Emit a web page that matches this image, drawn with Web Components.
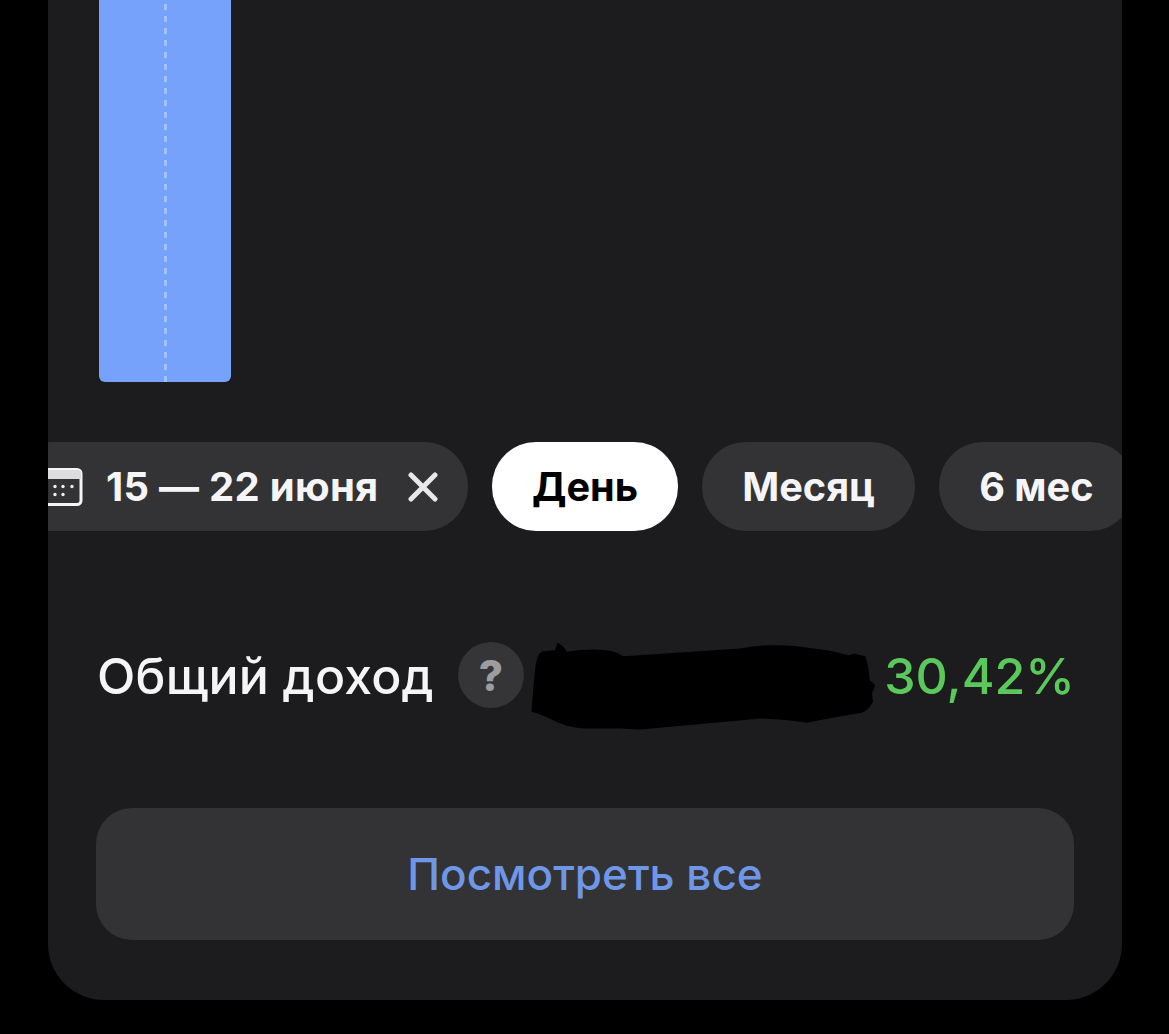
<!DOCTYPE html>
<html lang="ru">
<head>
<meta charset="utf-8">
<style>
  html, body { margin: 0; background: #000; }
  body { height: 1034px; overflow: hidden; font-family: Inter, "Liberation Sans", sans-serif; }
</style>
</head>
<body>
<income-card>
  <chart-bar></chart-bar>
  <chip-row>
    <range-chip>15 — 22 июня</range-chip>
    <period-chip active>День</period-chip>
    <period-chip>Месяц</period-chip>
    <period-chip>6 мес</period-chip>
  </chip-row>
  <income-total label="Общий доход" percent="30,42%"></income-total>
  <view-all>Посмотреть все</view-all>
</income-card>

<script>
class IncomeCard extends HTMLElement {
  constructor() {
    super();
    this.attachShadow({ mode: 'open' });
    this.shadowRoot.innerHTML = `
      <style>
        :host {
          display: flex;
          flex-direction: column;
          box-sizing: border-box;
          width: 1074px;
          height: 1000px;
          margin-left: 48px;
          background: #1c1c1e;
          border-radius: 0 0 56px 56px;
          overflow: hidden;
        }
      </style>
      <slot></slot>
    `;
  }
}

class ChartBar extends HTMLElement {
  constructor() {
    super();
    this.attachShadow({ mode: 'open' });
    this.shadowRoot.innerHTML = `
      <style>
        :host {
          display: flex;
          justify-content: center;
          flex: none;
          box-sizing: border-box;
          width: 132px;
          height: 382px;
          margin: 0 0 60px 51px;
          background: #76a2fb;
          border-radius: 0 0 6px 6px;
        }
        .line {
          width: 3px;
          height: 100%;
          background: linear-gradient(transparent 50%, #a3c2fb 50%) bottom / 3px 12px repeat-y;
        }
      </style>
      <div class="line"></div>
    `;
  }
}

class ChipRow extends HTMLElement {
  constructor() {
    super();
    this.attachShadow({ mode: 'open' });
    this.shadowRoot.innerHTML = `
      <style>
        :host {
          display: flex;
          flex: none;
          gap: 24px;
          height: 89px;
          margin-left: -40px;
          width: 1200px;
        }
      </style>
      <slot></slot>
    `;
  }
}

const chipStyle = `
  :host {
    display: flex;
    align-items: center;
    flex: none;
    box-sizing: border-box;
    height: 89px;
    border-radius: 44px;
    background: #333335;
    color: #f5f5f7;
    font: 700 40px Inter, "Liberation Sans", sans-serif;
  }
`;

class RangeChip extends HTMLElement {
  constructor() {
    super();
    this.attachShadow({ mode: 'open' });
    this.shadowRoot.innerHTML = `
      <style>
        ${chipStyle}
        :host { width: 460px; padding-left: 40px; }
        .cal { margin-right: 23px; flex: none; }
        .text { flex: 1; white-space: nowrap; letter-spacing: .27px; }
        .close { margin-right: 30px; flex: none; }
      </style>
      <svg class="cal" width="35" height="38" viewBox="0 0 35 38" fill="none">
        <rect x="-6" y="1.5" width="39" height="35" rx="4" stroke="#f5f5f7" stroke-width="3"/>
        <path d="M-6 2h36a3 3 0 0 1 3 3v6H-6z" fill="#dcdcde"/>
        <g fill="#f0f0f2">
          <circle cx="7" cy="18.5" r="1.7"/><circle cx="15" cy="18.5" r="1.7"/><circle cx="24" cy="18.5" r="1.7"/>
          <circle cx="7" cy="26.5" r="1.7"/><circle cx="15" cy="26.5" r="1.7"/>
        </g>
      </svg>
      <span class="text"><slot></slot></span>
      <svg class="close" width="30" height="30" viewBox="0 0 30 30" fill="none">
        <path d="M3 3l24 24M27 3L3 27" stroke="#e8e8ea" stroke-width="5" stroke-linecap="round"/>
      </svg>
    `;
  }
}

class PeriodChip extends HTMLElement {
  constructor() {
    super();
    this.attachShadow({ mode: 'open' });
    this.shadowRoot.innerHTML = `
      <style>
        ${chipStyle}
        :host { padding: 0 40px; font-size: 39.7px; }
        :host([active]) { background: #fff; color: #000; }
      </style>
      <slot></slot>
    `;
  }
}

class IncomeTotal extends HTMLElement {
  constructor() {
    super();
    this.attachShadow({ mode: 'open' });
    this.shadowRoot.innerHTML = `
      <style>
        :host {
          display: flex;
          align-items: center;
          flex: none;
          box-sizing: border-box;
          height: 92px;
          margin-top: 98px;
          padding: 0 47px 0 49px;
          font: 500 50px Inter, "Liberation Sans", sans-serif;
          color: #f5f5f7;
        }
        .label { white-space: nowrap; letter-spacing: .2px; margin-top: 2px; }
        .help {
          display: flex;
          align-items: center;
          justify-content: center;
          flex: none;
          width: 66px;
          height: 66px;
          margin-left: 24px;
          border-radius: 50%;
          background: #353537;
          color: #9c9ca1;
          font-size: 42px;
          font-weight: 800;
        }
        .blob { display: block; flex: none; margin: 22px 0 0 6px; }
        .percent { margin: 2px 0 0 auto; color: #5ac85a; white-space: nowrap; font-weight: 500; }
      </style>
      <span class="label">${this.getAttribute('label')}</span>
      <span class="help">?</span>
      <svg class="blob" width="347" height="92" viewBox="270 30 1040 275">
        <path fill="#000" d="M275 235Q280 170 285 120Q290 72 305 65Q325 60 345 60L352 38Q370 45 380 65Q440 55 500 60Q530 65 550 78L900 55Q950 45 1000 45Q1070 45 1120 55Q1180 62 1225 75L1240 70L1275 78Q1285 105 1288 150L1305 165L1295 190L1298 215Q1285 240 1265 248Q1190 260 1100 278Q1040 268 960 265Q800 280 600 298L540 295L430 295Q380 292 335 268Q300 252 275 245Z"/>
      </svg>
      <span class="percent">${this.getAttribute('percent')}</span>
    `;
  }
}

class ViewAll extends HTMLElement {
  constructor() {
    super();
    this.attachShadow({ mode: 'open' });
    this.shadowRoot.innerHTML = `
      <style>
        :host {
          display: flex;
          align-items: center;
          justify-content: center;
          flex: none;
          height: 132px;
          margin: 87px 48px 0;
          border-radius: 36px;
          background: #333335;
          color: #6f97e8;
          font: 500 44px Inter, "Liberation Sans", sans-serif;
        }
      </style>
      <slot></slot>
    `;
  }
}

customElements.define('income-card', IncomeCard);
customElements.define('chart-bar', ChartBar);
customElements.define('chip-row', ChipRow);
customElements.define('range-chip', RangeChip);
customElements.define('period-chip', PeriodChip);
customElements.define('income-total', IncomeTotal);
customElements.define('view-all', ViewAll);
</script>
</body>
</html>
